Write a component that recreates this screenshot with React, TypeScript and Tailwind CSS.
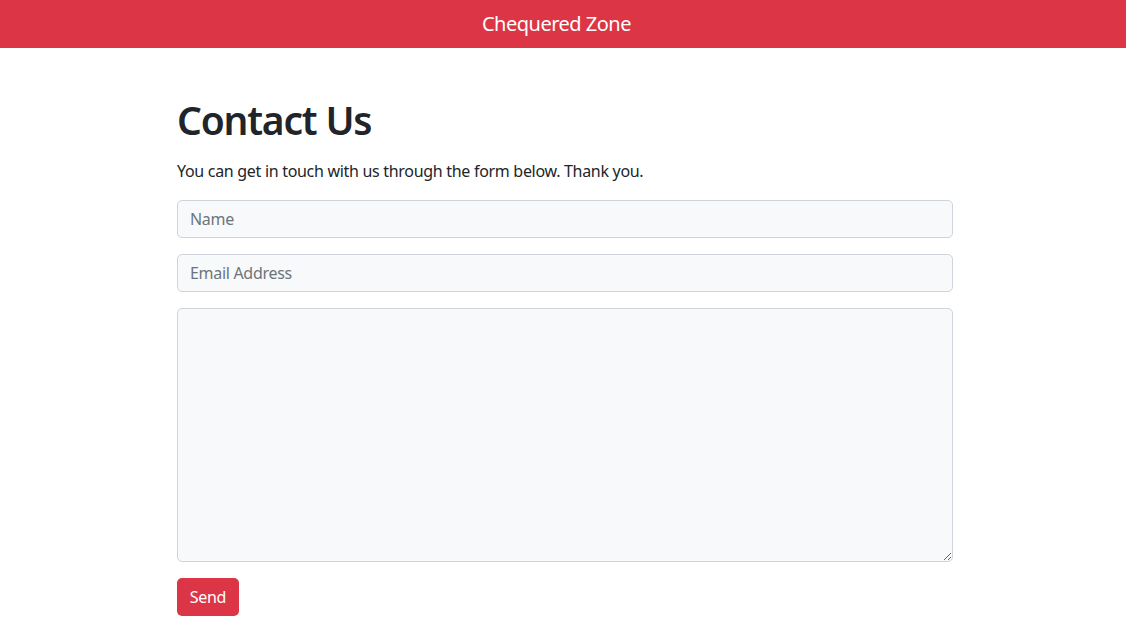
export default function App() {
  return (
    <div className="min-h-screen bg-white text-[#212529] font-['Noto_Sans','Open_Sans',sans-serif] tracking-[-0.3px]">
      <header className="h-12 bg-[#dc3545] flex items-center justify-center pr-[13px]">
        <span className="text-white text-[20px] leading-none tracking-[-0.5px]">Chequered Zone</span>
      </header>

      <main className="w-[776px] ml-[177px] pt-12">
        <h1 className="text-[39px] leading-[48px] font-semibold tracking-[-1.2px]">Contact Us</h1>
        <p className="mt-[15px] text-[16px] leading-6">
          You can get in touch with us through the form below. Thank you.
        </p>

        <form className="mt-[17px] flex flex-col gap-4" onSubmit={(e) => e.preventDefault()}>
          <input
            type="text"
            placeholder="Name"
            className="h-[38px] px-3 rounded-[5px] border border-[#ced4da] bg-[#f8f9fa] text-[16px] placeholder:text-[#6c757d] outline-none"
          />
          <input
            type="email"
            placeholder="Email Address"
            className="h-[38px] px-3 rounded-[5px] border border-[#ced4da] bg-[#f8f9fa] text-[16px] placeholder:text-[#6c757d] outline-none"
          />
          <textarea className="h-[254px] px-3 py-1.5 rounded-[5px] border border-[#ced4da] bg-[#f8f9fa] text-[16px] outline-none" />
          <div>
            <button
              type="submit"
              className="h-[38px] w-[62px] rounded-[5px] bg-[#dc3545] text-white text-[16px]"
            >
              Send
            </button>
          </div>
        </form>
      </main>
    </div>
  );
}
